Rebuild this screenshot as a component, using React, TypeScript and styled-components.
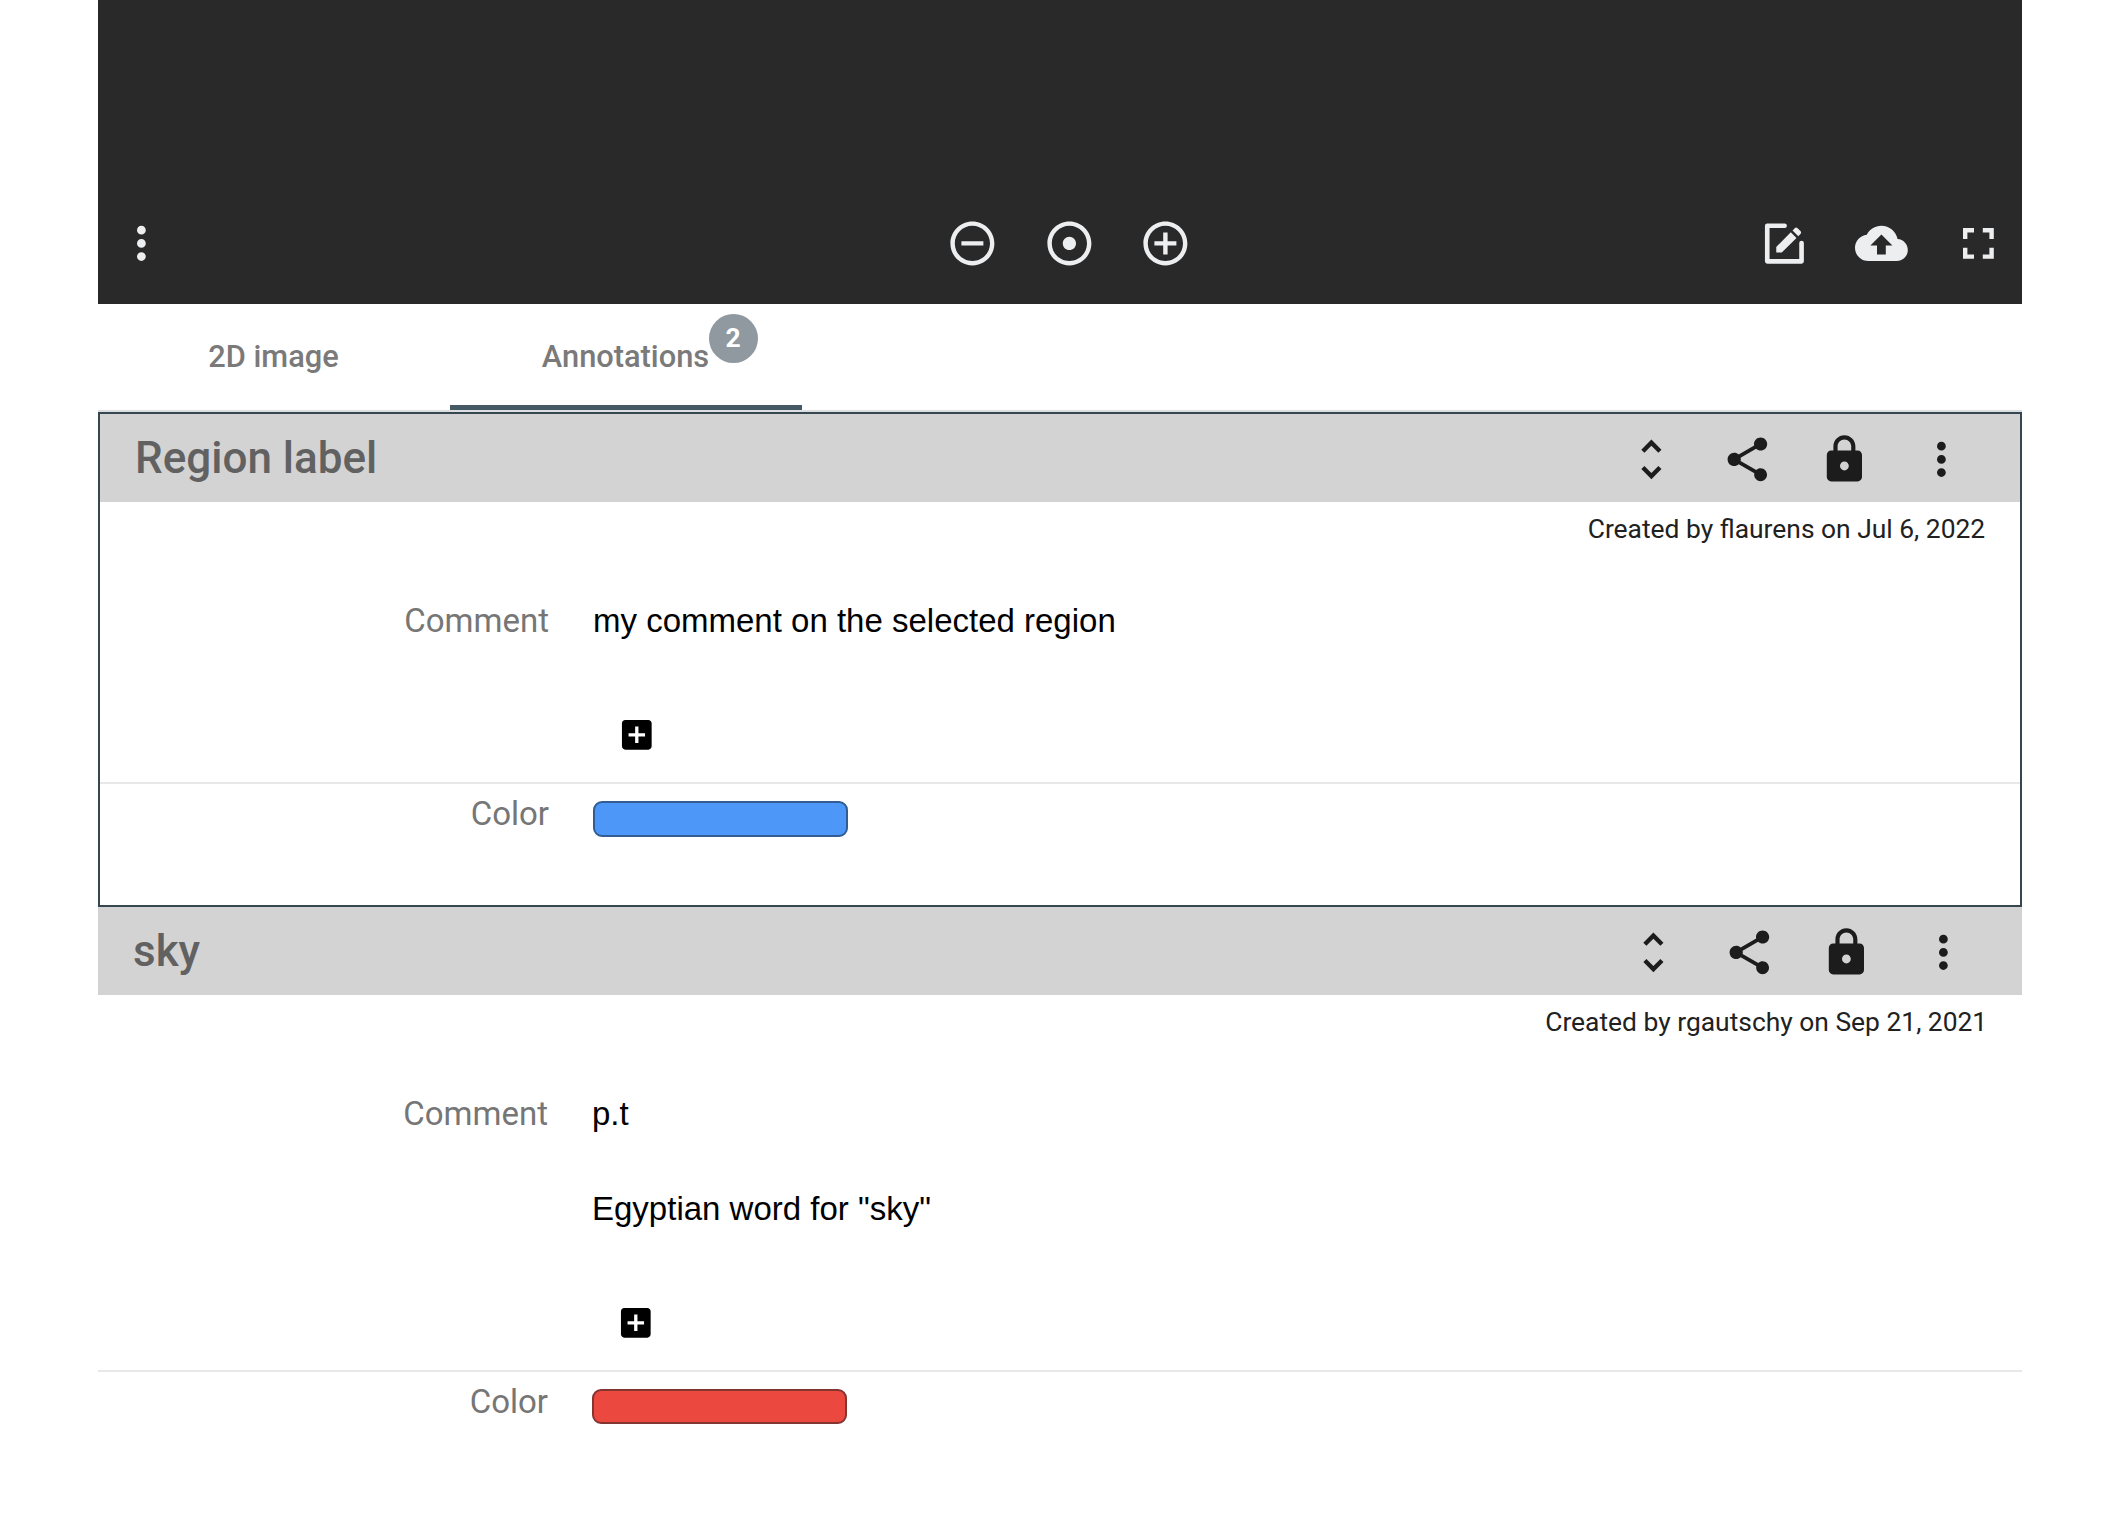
import React from "react";
import styled, { createGlobalStyle } from "styled-components";

const GlobalStyle = createGlobalStyle`
  *, *::before, *::after { box-sizing: border-box; }
  body { margin: 0; background: #fff; font-family: Roboto, "Liberation Sans", sans-serif; color: #000; }
  p, h2 { margin: 0; }
`;

const Page = styled.main`
  height: 1528px;
  padding: 0 106px 0 98px;
  overflow: hidden;
`;

const Viewer = styled.section`
  height: 304px;
  padding-bottom: 16.5px;
  background: #292929;
  display: grid;
  grid-template-columns: 1fr auto 1fr;
  align-items: end;
`;

const Tools = styled.div<{ $end?: boolean }>`
  display: flex;
  gap: 8.8px;
  margin-left: -0.6px;
  justify-content: ${(p) => (p.$end ? "flex-end" : "flex-start")};
`;

const CenterTools = styled(Tools)`
  margin-left: 0;
  padding-left: 18px;
`;

const IconButton = styled.button`
  width: 88px;
  height: 88px;
  padding: 0;
  border: 0;
  background: none;
  color: inherit;
  display: grid;
  place-items: center;
  flex: none;
`;

const ViewerButton = styled(IconButton)`
  color: #eceef0;
`;

const Glyph = styled.svg<{ $size?: number }>`
  display: block;
  width: ${(p) => p.$size ?? 52.8}px;
  height: ${(p) => p.$size ?? 52.8}px;
  fill: currentColor;
`;

const TabBar = styled.nav`
  display: flex;
  height: 108px;
  border-bottom: 2px solid #dcdfe1;
`;

const Tab = styled.button<{ $active?: boolean }>`
  width: 352px;
  padding: 0;
  border: 0;
  border-bottom: 5px solid ${(p) => (p.$active ? "#455a64" : "transparent")};
  background: none;
  color: #7a7a7a;
  font: 500 30.8px/1 Roboto, sans-serif;
  display: flex;
  align-items: center;
  justify-content: center;
  padding: 5px 1px 0 0;
`;

const TabLabel = styled.span`
  position: relative;
`;

const Badge = styled.span`
  position: absolute;
  left: calc(100% - 0.5px);
  top: -28px;
  width: 49px;
  height: 49px;
  border-radius: 50%;
  background: #9199a0;
  color: #fff;
  font: 700 26.4px/48px Roboto, sans-serif;
  text-align: center;
`;

const Card = styled.article<{ $selected?: boolean }>`
  border: ${(p) => (p.$selected ? "2px solid #37474f" : "0")};
`;

const CardHeader = styled.header`
  height: 88px;
  padding: 0 34.7px 0 35px;
  background: #d3d3d3;
  color: #1c1c1c;
  display: flex;
  align-items: center;
  justify-content: space-between;
`;

const Title = styled.h2`
  color: #616161;
  font: 500 44px/88px Roboto, sans-serif;
`;

const HeaderTools = styled.div`
  display: flex;
  gap: 8.8px;
  padding-top: 3px;
`;

const Meta = styled.p`
  padding: 9px 34.8px 0;
  height: 84px;
  text-align: right;
  color: #212121;
  font-size: 26.4px;
  line-height: 36px;
`;

const Field = styled.div`
  display: grid;
  grid-template-columns: calc(25% - 31px) 1fr;
  column-gap: 44px;
`;

const CommentField = styled(Field)`
  padding-top: 15px;
  border-bottom: 2px solid #e8e8e8;
`;

const ColorField = styled(Field)`
  height: 121px;
  padding-top: 10px;
`;

const Label = styled.span`
  color: #767676;
  text-align: right;
  font-size: 33px;
  line-height: 40px;
`;

const Comment = styled.div`
  font: 33px/40px "Liberation Sans", Helvetica, Arial, sans-serif;
`;

const Paragraph = styled.p`
  padding-bottom: 54.6px;
`;

const AddSlot = styled.div`
  display: flex;
  align-items: center;
  height: 86.4px;
  padding-bottom: 7px;
`;

const AddButton = styled(IconButton)`
  height: 79px;
  color: #000;
`;

const Swatch = styled.div<{ $fill: string; $edge: string }>`
  width: 255px;
  height: 35.6px;
  margin-top: 7px;
  border: 2px solid ${(p) => p.$edge};
  border-radius: 9px;
  background: ${(p) => p.$fill};
`;

const icons = {
  more: "M12 8c1.1 0 2-.9 2-2s-.9-2-2-2-2 .9-2 2 .9 2 2 2zm0 2c-1.1 0-2 .9-2 2s.9 2 2 2 2-.9 2-2-.9-2-2-2zm0 6c-1.1 0-2 .9-2 2s.9 2 2 2 2-.9 2-2-.9-2-2-2z",
  zoomOut: "M7 11v2h10v-2H7zm5-9C6.48 2 2 6.48 2 12s4.48 10 10 10 10-4.48 10-10S17.52 2 12 2zm0 18c-4.41 0-8-3.59-8-8s3.59-8 8-8 8 3.59 8 8-3.59 8-8 8z",
  home: "M12 2C6.49 2 2 6.49 2 12s4.49 10 10 10 10-4.49 10-10S17.51 2 12 2zm0 18c-4.41 0-8-3.59-8-8s3.59-8 8-8 8 3.59 8 8-3.59 8-8 8zm3-8c0 1.66-1.34 3-3 3s-3-1.34-3-3 1.34-3 3-3 3 1.34 3 3z",
  zoomIn: "M13 7h-2v4H7v2h4v4h2v-4h4v-2h-4V7zm-1-5C6.48 2 2 6.48 2 12s4.48 10 10 10 10-4.48 10-10S17.52 2 12 2zm0 18c-4.41 0-8-3.59-8-8s3.59-8 8-8 8 3.59 8 8-3.59 8-8 8z",
  upload: "M19.35 10.04C18.67 6.59 15.64 4 12 4 9.11 4 6.6 5.64 5.35 8.04 2.34 8.36 0 10.91 0 14c0 3.31 2.69 6 6 6h13c2.76 0 5-2.24 5-5 0-2.64-2.05-4.78-4.65-4.96zM14 13v4h-4v-4H7l5-5 5 5h-3z",
  fullscreen: "M7 14H5v5h5v-2H7v-3zm-2-4h2V7h3V5H5v5zm12 7h-3v2h5v-5h-2v3zM14 5v2h3v3h2V5h-5z",
  unfold: "M12 5.83L15.17 9l1.41-1.41L12 3 7.41 7.59 8.83 9 12 5.83zm0 12.34L8.83 15l-1.41 1.41L12 21l4.59-4.59L15.17 15 12 18.17z",
  share: "M18 16.08c-.76 0-1.44.3-1.96.77L8.91 12.7c.05-.23.09-.46.09-.7s-.04-.47-.09-.7l7.05-4.11c.54.5 1.25.81 2.04.81 1.66 0 3-1.34 3-3s-1.34-3-3-3-3 1.34-3 3c0 .24.04.47.09.7L8.04 9.81C7.5 9.31 6.79 9 6 9c-1.66 0-3 1.34-3 3s1.34 3 3 3c.79 0 1.5-.31 2.04-.81l7.12 4.16c-.05.21-.08.43-.08.65 0 1.61 1.31 2.92 2.92 2.92s2.92-1.31 2.92-2.92-1.31-2.92-2.92-2.92z",
  lock: "M18 8h-1V6c0-2.76-2.24-5-5-5S7 3.24 7 6v2H6c-1.1 0-2 .9-2 2v10c0 1.1.9 2 2 2h12c1.1 0 2-.9 2-2V10c0-1.1-.9-2-2-2zm-6 9c-1.1 0-2-.9-2-2s.9-2 2-2 2 .9 2 2-.9 2-2 2zm3.1-9H8.9V6c0-1.71 1.39-3.1 3.1-3.1 1.71 0 3.1 1.39 3.1 3.1v2z",
  addBox: "M19 3H5c-1.11 0-2 .9-2 2v14c0 1.1.89 2 2 2h14c1.1 0 2-.9 2-2V5c0-1.1-.9-2-2-2zm-2 10h-4v4h-2v-4H7v-2h4V7h2v4h4v2z",
};

function Icon({ name, size }: { name: keyof typeof icons; size?: number }) {
  return (
    <Glyph $size={size} viewBox="0 0 24 24" aria-hidden="true">
      <path d={icons[name]} />
    </Glyph>
  );
}

function EditIcon() {
  return (
    <Glyph viewBox="0 0 24 24" aria-hidden="true">
      <path
        d="M12.1 3.95H4.2v16.2h15.6v-8.3"
        fill="none"
        stroke="currentColor"
        strokeWidth="2.1"
        strokeLinecap="round"
        strokeLinejoin="round"
      />
      <path d="M8.3 16.1v-2.5L14.9 6.9 17.5 9.5 10.8 16.1zM15.7 6.1l1-1q.6-.6 1.3 0l1.3 1.3q.6.6 0 1.3l-1 1z" />
    </Glyph>
  );
}

type Annotation = {
  title: string;
  meta: string;
  comment: string[];
  fill: string;
  edge: string;
  selected?: boolean;
};

const annotations: Annotation[] = [
  {
    title: "Region label",
    meta: "Created by flaurens on Jul 6, 2022",
    comment: ["my comment on the selected region"],
    fill: "#4d97f9",
    edge: "#315c94",
    selected: true,
  },
  {
    title: "sky",
    meta: "Created by rgautschy on Sep 21, 2021",
    comment: ["p.t", 'Egyptian word for "sky"'],
    fill: "#eb483f",
    edge: "#853530",
  },
];

function AnnotationCard({ item }: { item: Annotation }) {
  return (
    <Card $selected={item.selected}>
      <CardHeader>
        <Title>{item.title}</Title>
        <HeaderTools>
          <IconButton aria-label="Expand"><Icon name="unfold" /></IconButton>
          <IconButton aria-label="Share"><Icon name="share" /></IconButton>
          <IconButton aria-label="Permissions"><Icon name="lock" /></IconButton>
          <IconButton aria-label="More"><Icon name="more" /></IconButton>
        </HeaderTools>
      </CardHeader>
      <Meta>{item.meta}</Meta>
      <CommentField>
        <Label>Comment</Label>
        <Comment>
          {item.comment.map((line) => (
            <Paragraph key={line}>{line}</Paragraph>
          ))}
          <AddSlot>
            <AddButton aria-label="Add comment"><Icon name="addBox" size={39.6} /></AddButton>
          </AddSlot>
        </Comment>
      </CommentField>
      <ColorField>
        <Label>Color</Label>
        <Swatch $fill={item.fill} $edge={item.edge} />
      </ColorField>
    </Card>
  );
}

export default function App() {
  return (
    <>
      <GlobalStyle />
      <Page>
        <Viewer>
          <Tools>
            <ViewerButton aria-label="More"><Icon name="more" /></ViewerButton>
          </Tools>
          <CenterTools>
            <ViewerButton aria-label="Zoom out"><Icon name="zoomOut" /></ViewerButton>
            <ViewerButton aria-label="Reset"><Icon name="home" /></ViewerButton>
            <ViewerButton aria-label="Zoom in"><Icon name="zoomIn" /></ViewerButton>
          </CenterTools>
          <Tools $end>
            <ViewerButton aria-label="Draw region"><EditIcon /></ViewerButton>
            <ViewerButton aria-label="Replace file"><Icon name="upload" /></ViewerButton>
            <ViewerButton aria-label="Fullscreen"><Icon name="fullscreen" /></ViewerButton>
          </Tools>
        </Viewer>
        <TabBar>
          <Tab>2D image</Tab>
          <Tab $active>
            <TabLabel>Annotations<Badge>2</Badge></TabLabel>
          </Tab>
        </TabBar>
        {annotations.map((item) => (
          <AnnotationCard key={item.title} item={item} />
        ))}
      </Page>
    </>
  );
}
